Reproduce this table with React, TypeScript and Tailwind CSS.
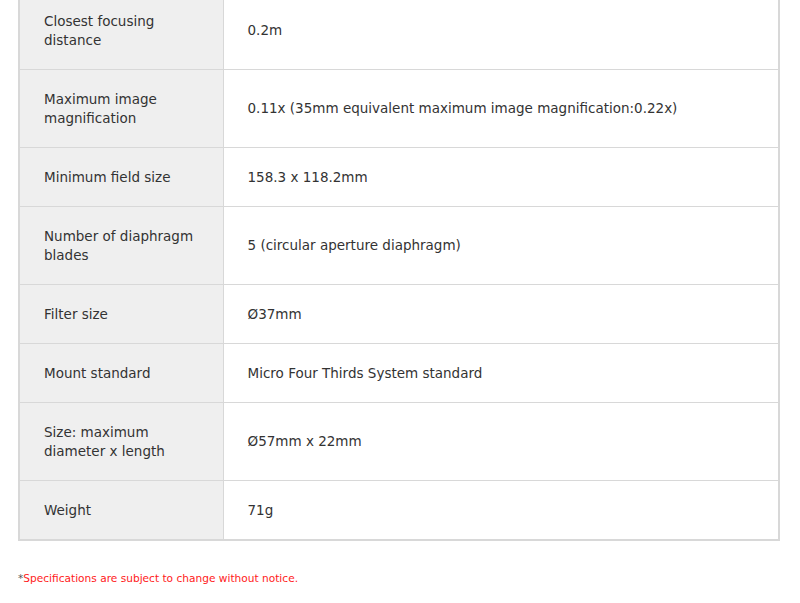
const rows: [string, string][] = [
  ['Closest focusing distance', '0.2m'],
  ['Maximum image magnification', '0.11x (35mm equivalent maximum image magnification:0.22x)'],
  ['Minimum field size', '158.3 x 118.2mm'],
  ['Number of diaphragm blades', '5 (circular aperture diaphragm)'],
  ['Filter size', 'Ø37mm'],
  ['Mount standard', 'Micro Four Thirds System standard'],
  ['Size: maximum diameter x length', 'Ø57mm x 22mm'],
  ['Weight', '71g'],
];

const App = () => {
  return (
    <div className="w-[800px] h-[603px] overflow-hidden bg-white text-[#333] font-['DejaVu_Sans',sans-serif]">
      <div className="mx-[18px] w-[762px] -mt-[8px]">
        <table className="w-full border-collapse text-[13.5px] leading-[19px] border-2 border-t-0 border-[#d8d8d8]">
          <tbody>
            {rows.map(([label, value]) => (
              <tr key={label} className="border-b border-[#d8d8d8]">
                <th className="w-[204px] bg-[#efefef] text-left font-normal align-middle pl-[24px] pr-[20px] py-[19.5px] border-r border-[#d8d8d8]">
                  {label}
                </th>
                <td className="align-middle pl-[24px] pr-[20px] py-[19.5px]">{value}</td>
              </tr>
            ))}
          </tbody>
        </table>
        <p className="mt-[30px] text-[10.6px] text-[#ff1a1a]">
          <span className="text-[#555]">*</span>Specifications are subject to change without notice.
        </p>
      </div>
    </div>
  );
};

export default App;
